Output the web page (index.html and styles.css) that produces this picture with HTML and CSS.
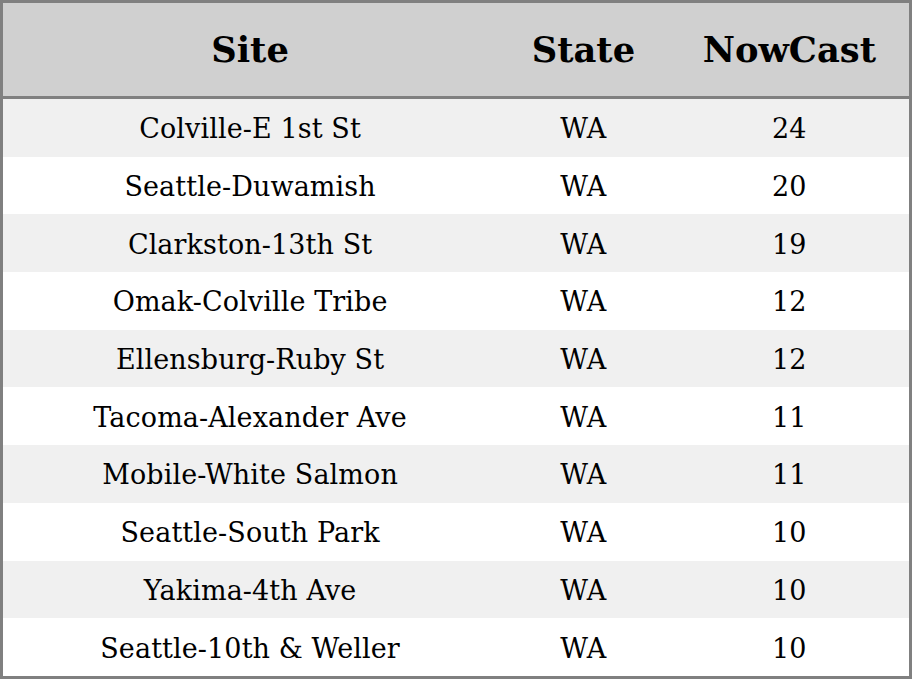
FILE: index.html
```html
<!DOCTYPE html>
<html>
<head>
<meta charset="utf-8">
<link rel="stylesheet" href="styles.css">
</head>
<body>
<table class="aq">
  <colgroup><col class="c-site"><col class="c-state"><col class="c-now"></colgroup>
  <thead>
    <tr><th>Site</th><th>State</th><th>NowCast</th></tr>
  </thead>
  <tbody>
    <tr><td>Colville-E 1st St</td><td>WA</td><td>24</td></tr>
    <tr><td>Seattle-Duwamish</td><td>WA</td><td>20</td></tr>
    <tr><td>Clarkston-13th St</td><td>WA</td><td>19</td></tr>
    <tr><td>Omak-Colville Tribe</td><td>WA</td><td>12</td></tr>
    <tr><td>Ellensburg-Ruby St</td><td>WA</td><td>12</td></tr>
    <tr><td>Tacoma-Alexander Ave</td><td>WA</td><td>11</td></tr>
    <tr><td>Mobile-White Salmon</td><td>WA</td><td>11</td></tr>
    <tr><td>Seattle-South Park</td><td>WA</td><td>10</td></tr>
    <tr><td>Yakima-4th Ave</td><td>WA</td><td>10</td></tr>
    <tr><td>Seattle-10th &amp; Weller</td><td>WA</td><td>10</td></tr>
  </tbody>
</table>
</body>
</html>
```

FILE: styles.css
```css
html, body {
  margin: 0;
  padding: 0;
  background: #ffffff;
}
.aq {
  width: 912px;
  height: 679px;
  border-collapse: collapse;
  border: 3px solid #808080;
  font-family: "DejaVu Serif", serif;
  color: #000;
  table-layout: fixed;
}
.c-site { width: 494px; }
.c-state { width: 172px; }
.c-now { width: 240px; }
.aq th {
  background: #d0d0d0;
  font-size: 35.3px;
  font-weight: bold;
  height: 93px;
  padding: 0;
  text-align: center;
  border-bottom: 3px solid #808080;
  line-height: 1;
}
.aq td {
  font-size: 27px;
  text-align: center;
  padding: 2px 0 0 0;
  height: 55.7px;
  line-height: 1;
  letter-spacing: 0.1px;
}
.aq tbody tr:nth-child(odd) td { background: #f0f0f0; }
.aq tbody tr:nth-child(even) td { background: #ffffff; }
```
